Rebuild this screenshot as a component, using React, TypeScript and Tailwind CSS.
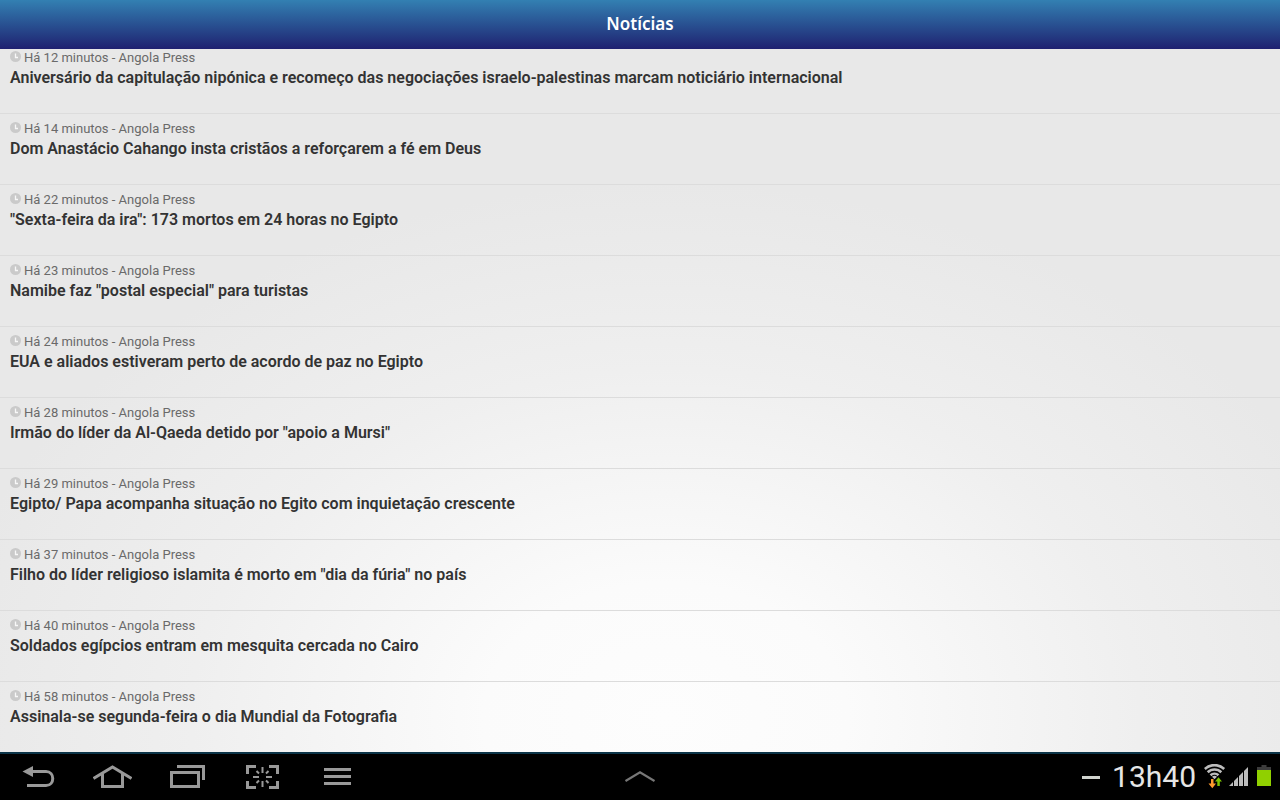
import type { ReactNode } from "react";

const news = [
  { time: "Há 12 minutos", title: "Aniversário da capitulação nipónica e recomeço das negociações israelo-palestinas marcam noticiário internacional" },
  { time: "Há 14 minutos", title: "Dom Anastácio Cahango insta cristãos a reforçarem a fé em Deus" },
  { time: "Há 22 minutos", title: "\"Sexta-feira da ira\": 173 mortos em 24 horas no Egipto" },
  { time: "Há 23 minutos", title: "Namibe faz \"postal especial\" para turistas" },
  { time: "Há 24 minutos", title: "EUA e aliados estiveram perto de acordo de paz no Egipto" },
  { time: "Há 28 minutos", title: "Irmão do líder da Al-Qaeda detido por \"apoio a Mursi\"" },
  { time: "Há 29 minutos", title: "Egipto/ Papa acompanha situação no Egito com inquietação crescente" },
  { time: "Há 37 minutos", title: "Filho do líder religioso islamita é morto em \"dia da fúria\" no país" },
  { time: "Há 40 minutos", title: "Soldados egípcios entram em mesquita cercada no Cairo" },
  { time: "Há 58 minutos", title: "Assinala-se segunda-feira o dia Mundial da Fotografia" },
];

function ClockIcon() {
  return (
    <svg className="h-[11px] w-[11px] shrink-0" viewBox="0 0 11 11" aria-hidden="true">
      <circle cx="5.5" cy="5.5" r="5.5" fill="#cacaca" />
      <path d="M5.5 2.500v4h2.500" fill="none" stroke="#f8f8f8" strokeWidth="1.3" />
    </svg>
  );
}

function NavButton({ label, children }: { label: string; children: ReactNode }) {
  return (
    <button type="button" aria-label={label} className="flex w-[75px] items-center justify-center">
      <svg className="h-[30px] w-[39px]" viewBox="0 0 39 30" fill="none" stroke="#999999" strokeWidth="3">
        {children}
      </svg>
    </button>
  );
}

function StatusIcons() {
  return (
    <>
      <svg className="ml-2 h-[26px] w-[22px]" viewBox="0 0 22 26" fill="none" aria-hidden="true">
        <g stroke="#bdbdbd" strokeWidth="2.6">
          <path d="M0.8 5C6.500 -0.200 14.500 -0.200 20.200 5" />
          <path d="M3.700 8.300C7.500 4.600 13.500 4.600 17.300 8.300" />
          <path d="M6.500 11.300C8.800 9.200 12.200 9.200 14.500 11.300" />
        </g>
        <path d="M10.500 15.300l-2.500-2.500c1.400-1.300 3.600-1.300 5 0z" fill="#bdbdbd" />
        <path d="M7 15h2.500v4.500H12L8.300 24.300 4.500 19.500H7z" fill="#ff9a2e" />
        <path d="M13.300 22v-4.500H11L14.500 13.300l3.500 4.200h-2.200V22z" fill="#7cc400" />
      </svg>
      <svg className="ml-[3px] h-[22px] w-[19px]" viewBox="0 -1 19 22" fill="#bdbdbd" aria-hidden="true">
        <path d="M0 19l4-4v4zM5 19v-5l4-4v9zM10 19V9l4-4v14zM15 19V4l4-4v19z" />
      </svg>
      <svg className="ml-[9px] h-6 w-[14px]" viewBox="0 0 14 24" aria-hidden="true">
        <path d="M4.500 0h5v2H14v3H0V2h4.500z" fill="#3c3c3c" />
        <path d="M0 5h14v16H0z" fill="#90d000" />
      </svg>
    </>
  );
}

export default function App() {
  return (
    <div className="flex min-h-screen flex-col bg-[#e7e7e7] font-['Roboto',sans-serif]">
      <header className="flex h-[49px] items-center justify-center bg-linear-to-b from-[#3380b2] to-[#1f2070] pb-px">
        <h1 className="font-['Noto_Sans',sans-serif] text-[17px] leading-6 font-semibold text-white">Notícias</h1>
      </header>

      <main className="flex-1 bg-[radial-gradient(ellipse_57%_76%_at_52%_95%,#fdfdfd_0%,#fbfbfb_25%,#efefef_65%,#e8e8e8_100%)]">
        <ul className="divide-y divide-[#dcdcdc]">
          {news.map((item) => (
            <li key={item.title} className="pt-1.5 pb-6 first:pt-0">
              <a href="#noticia" className="block px-2.5">
                <div className="flex items-start gap-[3px] text-[13px] leading-[18px] text-[#6a6a6a]">
                  <span className="pt-0.5">
                    <ClockIcon />
                  </span>
                  <span>{item.time} - Angola Press</span>
                </div>
                <h2 className="text-[16px] leading-[22px] font-semibold text-[#333333]">{item.title}</h2>
              </a>
            </li>
          ))}
        </ul>
      </main>

      <footer className="grid h-12 grid-cols-[1fr_auto_1fr] border-t-2 border-[#0b3448] bg-black">
        <nav className="flex">
          <NavButton label="Voltar">
            <path d="M14.500 9.500H28c9 0 9 14 0 14H9" />
            <path d="M4.500 9.500L15 4v11z" fill="#999999" stroke="none" />
          </NavButton>
          <NavButton label="Início">
            <path d="M0.500 16.500L19.500 5l19 11.500M9.500 12v12.500h20V12" />
          </NavButton>
          <NavButton label="Recentes">
            <path d="M3.500 10.500h27v14h-27zM9 4.500h26.500V18" />
          </NavButton>
          <NavButton label="Capturar ecrã">
            <path d="M4.500 12V4.500H13M26 4.500h8.500V12M34.500 19v6.500H26M13 25.500H4.500V19" />
            <path
              d="M19.500 5v6M19.500 19v6M10 15h6M23 15h6M13.500 9l2.500 2.500M25.500 9L23 11.500M13.500 21l2.500-2.500M25.500 21L23 18.500"
              strokeWidth="2"
            />
          </NavButton>
          <NavButton label="Menu">
            <path d="M6 7.500h27M6 14.500h27M6 21.500h27" />
          </NavButton>
        </nav>

        <button type="button" aria-label="Abrir painel" className="flex items-center">
          <svg className="h-3 w-[30px]" viewBox="0 0 30 12" fill="none" stroke="#777777" strokeWidth="2.2">
            <path d="M0.500 10L15 1.300l14.500 8.700" />
          </svg>
        </button>

        <div className="flex items-center justify-end pr-[9px]">
          <span className="mr-3 h-[3px] w-[18px] bg-[#d0d4ce]" />
          <time className="text-[30px] leading-9 text-[#e6e6e6]" dateTime="13:40">13h40</time>
          <StatusIcons />
        </div>
      </footer>
    </div>
  );
}
